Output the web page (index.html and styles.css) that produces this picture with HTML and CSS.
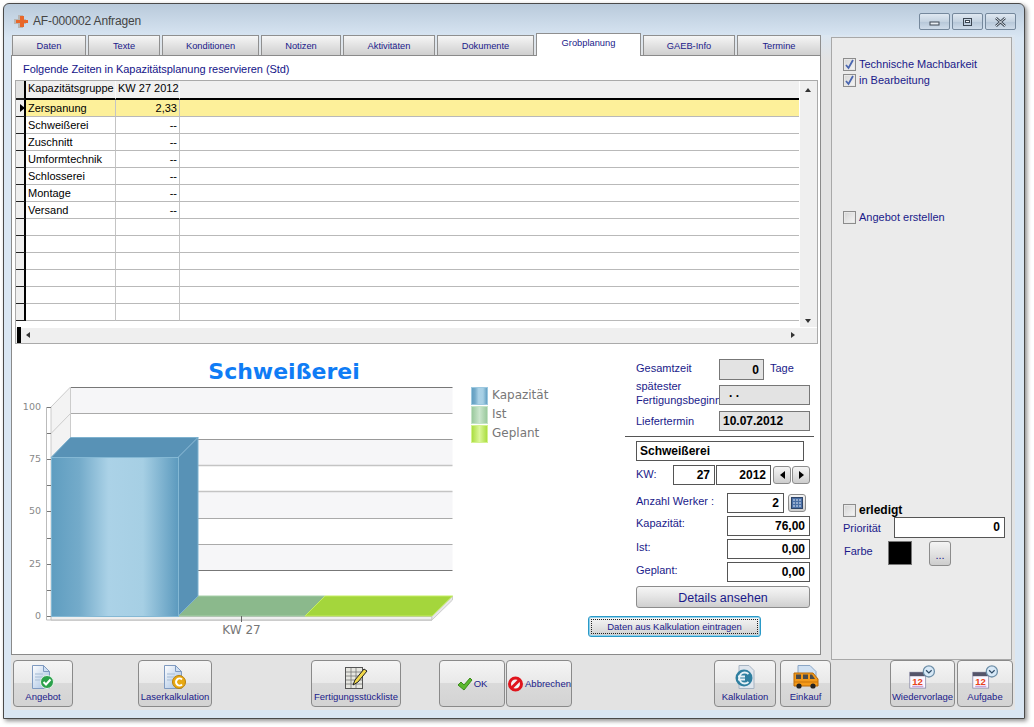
FILE: index.html
```html
<!DOCTYPE html>
<html lang="de">
<head>
<meta charset="utf-8">
<title>AF-000002 Anfragen</title>
<link rel="stylesheet" href="styles.css">
</head>
<body>
<svg class="defs" width="0" height="0">
  <defs>
    <linearGradient id="barGrad" x1="0" x2="1" y1="0" y2="0">
      <stop offset="0" stop-color="#5f9dc0"/><stop offset=".22" stop-color="#74abca"/><stop offset=".45" stop-color="#abd2e7"/><stop offset=".72" stop-color="#a6cfe4"/><stop offset="1" stop-color="#5c9abe"/>
    </linearGradient>
    <linearGradient id="istGrad" x1="0" x2="1" y1="0" y2="0">
      <stop offset="0" stop-color="#97c79a"/><stop offset=".5" stop-color="#cbe6cd"/><stop offset="1" stop-color="#97c79a"/>
    </linearGradient>
    <linearGradient id="planGrad" x1="0" x2="1" y1="0" y2="0">
      <stop offset="0" stop-color="#a8dc3c"/><stop offset=".5" stop-color="#dcf79a"/><stop offset="1" stop-color="#a8dc3c"/>
    </linearGradient>
    <linearGradient id="docGrad" x1="0" x2="1" y1="0" y2="1">
      <stop offset="0" stop-color="#ffffff"/><stop offset="1" stop-color="#9fbce0"/>
    </linearGradient>
    <symbol id="doc" viewBox="0 0 24 24">
      <path d="M1.500 .5h11l6 6v17H1.500z" fill="url(#docGrad)" stroke="#7f9ac0"/>
      <path d="M12.500 .5v6h6z" fill="#cfe0f4" stroke="#7f9ac0"/>
      <path d="M4 9h8M4 12h11M4 15h7" stroke="#b7c9de" stroke-width="1.400"/>
    </symbol>
    <symbol id="cal" viewBox="0 0 34 30">
      <rect x="1" y="9" width="20" height="20" fill="#fbf7ff" stroke="#8a8aa8"/>
      <rect x="1" y="9" width="20" height="5" fill="#55556a"/>
      <path d="M4 27h14" stroke="#c9a6d8" stroke-width="2"/>
      <text x="4" y="25" class="cal-num">12</text>
      <circle cx="25" cy="8" r="7" fill="#d8e9f7" stroke="#6e8fa8" stroke-width="1.600"/>
      <path d="M21.500 6.500l3.500 3.500 3.500-3.500" fill="none" stroke="#2e4a66" stroke-width="1.500"/>
    </symbol>
  </defs>
</svg>

<div class="window">
  <header class="titlebar">
    <svg class="app-icon" width="15" height="15" viewBox="0 0 15 15">
      <path d="M0 5h4V1h5v4h3v5H9v4H4v-4H0z" fill="#b9b5b2"/>
      <path d="M6 2h4v4h4v3h-4v4H6V9H2V6h4z" fill="#e8672a"/>
    </svg>
    <span class="title">AF-000002 Anfragen</span>
    <div class="win-buttons">
      <button class="win-btn"><svg width="11" height="9" viewBox="0 0 11 9"><rect x="1" y="5" width="9" height="3" fill="#e8eef4" stroke="#3c4652"/></svg></button>
      <button class="win-btn"><svg width="11" height="10" viewBox="0 0 11 10"><rect x="1.500" y="1.500" width="8" height="7" fill="none" stroke="#3c4652"/><rect x="3.500" y="3.500" width="4" height="2" fill="#fff" stroke="#3c4652"/></svg></button>
      <button class="win-btn"><svg width="13" height="10" viewBox="0 0 13 10"><path d="M2 1l9 8M11 1l-9 8" stroke="#3c4652" stroke-width="2.600"/><path d="M2 1l9 8M11 1l-9 8" stroke="#e6edf3" stroke-width="1"/></svg></button>
    </div>
  </header>

  <div class="client">
    <div class="main">
      <div class="left">
        <nav class="tabs">
          <div class="tab">Daten</div>
          <div class="tab">Texte</div>
          <div class="tab">Konditionen</div>
          <div class="tab">Notizen</div>
          <div class="tab">Aktivitäten</div>
          <div class="tab">Dokumente</div>
          <div class="tab tab-active">Grobplanung</div>
          <div class="tab">GAEB-Info</div>
          <div class="tab">Termine</div>
        </nav>

        <section class="page">
          <div class="caption">Folgende Zeiten in Kapazitätsplanung reservieren (Std)</div>

          <div class="datagrid">
            <div class="grid-top">
              <div class="grid-view">
                <table class="gtable">
                  <thead>
                    <tr><th class="ind"></th><th class="c1">Kapazitätsgruppe</th><th class="c2">KW 27 2012</th><th class="c3"></th></tr>
                  </thead>
                  <tbody>
                    <tr class="sel"><td class="ind"><span class="marker"></span></td><td>Zerspanung</td><td class="num">2,33</td><td></td></tr>
                    <tr><td class="ind"></td><td>Schweißerei</td><td class="num">--</td><td></td></tr>
                    <tr><td class="ind"></td><td>Zuschnitt</td><td class="num">--</td><td></td></tr>
                    <tr><td class="ind"></td><td>Umformtechnik</td><td class="num">--</td><td></td></tr>
                    <tr><td class="ind"></td><td>Schlosserei</td><td class="num">--</td><td></td></tr>
                    <tr><td class="ind"></td><td>Montage</td><td class="num">--</td><td></td></tr>
                    <tr><td class="ind"></td><td>Versand</td><td class="num">--</td><td></td></tr>
                    <tr><td class="ind"></td><td></td><td></td><td></td></tr>
                    <tr><td class="ind"></td><td></td><td></td><td></td></tr>
                    <tr><td class="ind"></td><td></td><td></td><td></td></tr>
                    <tr><td class="ind"></td><td></td><td></td><td></td></tr>
                    <tr><td class="ind"></td><td></td><td></td><td></td></tr>
                    <tr><td class="ind"></td><td></td><td></td><td></td></tr>
                  </tbody>
                </table>
              </div>
              <div class="vscroll"><span class="arrow-up"></span><span class="arrow-down"></span></div>
            </div>
            <div class="hscroll"><span class="hstub"></span><span class="arrow-left"></span><span class="arrow-right"></span></div>
          </div>

          <div class="lower">
            <svg class="chart" width="576" height="311" viewBox="12 344 576 311">
              <text x="284" y="379" class="c-title" text-anchor="middle">Schweißerei</text>
              <rect x="70.500" y="387" width="382" height="26.500" fill="#f6f6f8"/>
              <rect x="70.500" y="439.500" width="382" height="26" fill="#f6f6f8"/>
              <rect x="70.500" y="491.500" width="382" height="26.500" fill="#f6f6f8"/>
              <rect x="70.500" y="544" width="382" height="26" fill="#f6f6f8"/>
              <g class="c-lines">
                <path d="M70.500 387.500H452.500" stroke="#777"/>
                <path d="M70.500 413.500H452.500" stroke="#aaa"/>
                <path d="M70.500 439.500H452.500" stroke="#999"/>
                <path d="M70.500 465.500H452.500" stroke="#c4c4c4" stroke-width="1.400"/>
                <path d="M70.500 491.500H452.500" stroke="#c4c4c4" stroke-width="1.400"/>
                <path d="M70.500 518.500H452.500" stroke="#aaa"/>
                <path d="M70.500 544.500H452.500" stroke="#aaa"/>
                <path d="M70.500 570.500H452.500" stroke="#777"/>
              </g>
              <path d="M51 407L70.500 387V596L51 616z" fill="#f3f3f3" stroke="#ccc"/>
              <path d="M51 433.500L70.500 413.500" stroke="#ccc"/>
              <path d="M46 407.500H51M46 433.500H51M46 459.500H51M46 485.500H51M46 511.500H51M46 538.500H51M46 564.500H51M46 590.500H51M46 616.500H51" stroke="#777"/>
              <path d="M46.500 407V620H432L452.500 597" fill="none" stroke="#bbb"/>
              <path d="M51 616.500H432V620H51z" fill="#efefef" stroke="#bbb"/>
              <path d="M432 616.500L452.500 596V600L432 620z" fill="#e8e8e8" stroke="#ccc"/>
              <g class="c-axis" text-anchor="end">
                <text x="41" y="410">100</text>
                <text x="41" y="462">75</text>
                <text x="41" y="514">50</text>
                <text x="41" y="567">25</text>
                <text x="41" y="619">0</text>
              </g>
              <path d="M178 616L198 596H325L305 616z" fill="#8bb98c" stroke="#a6d0a8"/>
              <path d="M305 616L325 596H452.500L432 616z" fill="#a4d63c" stroke="#c4ee60"/>
              <path d="M51 457.500L70.500 437.500H198L178 457.500z" fill="#5892b6" stroke="#7fb2cf"/>
              <path d="M178 457.500L198 437.500V596L178 616z" fill="#5892b6" stroke="#7fb2cf"/>
              <rect x="51.500" y="457.500" width="127" height="159" fill="url(#barGrad)" stroke="#84b8d4"/>
              <path d="M241.500 616V622" stroke="#666"/>
              <text x="241.500" y="634" class="c-cat" text-anchor="middle">KW 27</text>
              <rect x="471.500" y="387.500" width="16" height="17" fill="url(#barGrad)" stroke="#9cc8e0"/>
              <rect x="471.500" y="406.500" width="16" height="17" fill="url(#istGrad)" stroke="#c5e3c7"/>
              <rect x="471.500" y="425.500" width="16" height="17" fill="url(#planGrad)" stroke="#d4f290"/>
              <g class="c-legend">
                <text x="492" y="399">Kapazität</text>
                <text x="492" y="418">Ist</text>
                <text x="492" y="437">Geplant</text>
              </g>
            </svg>

            <div class="form">
              <div class="row r-total">
                <span class="lab lab-83 lab-up2">Gesamtzeit</span>
                <span class="box ro w45">0</span>
                <span class="lab unit lab-up2">Tage</span>
              </div>
              <div class="row r-start">
                <span class="lab lab-83 lab-two">spätester<br>Fertigungsbeginn</span>
                <span class="box ro w91 left-text dots">. .</span>
              </div>
              <div class="row r-deliv">
                <span class="lab lab-83">Liefertermin</span>
                <span class="box ro w91 left-text">10.07.2012</span>
              </div>
              <div class="sep"></div>
              <div class="row r-name"><span class="box w168 left-text">Schweißerei</span></div>
              <div class="row r-kw">
                <span class="lab lab-37 lab-up1">KW:</span>
                <span class="box w43">27</span>
                <span class="box w55">2012</span>
                <button class="mini mini-first"><span class="tri-left"></span></button>
                <button class="mini"><span class="tri-right"></span></button>
              </div>
              <div class="row r-work">
                <span class="lab lab-91 lab-up2">Anzahl Werker :</span>
                <span class="box w57">2</span>
                <button class="mini mini-calc">
                  <svg width="12" height="12" viewBox="0 0 12 12"><rect x="0.500" y="0.500" width="11" height="11" fill="#4a6fa5" stroke="#2e4468"/><path d="M2 3h8M2 6h8M2 9h8" stroke="#dbe6f5" stroke-width="1.200" stroke-dasharray="2 1"/></svg>
                </button>
              </div>
              <div class="row r-val"><span class="lab lab-91 lab-up">Kapazität:</span><span class="box w83">76,00</span></div>
              <div class="row r-val"><span class="lab lab-91 lab-up2">Ist:</span><span class="box w83">0,00</span></div>
              <div class="row r-val"><span class="lab lab-91 lab-up2">Geplant:</span><span class="box w83">0,00</span></div>
              <button class="btn details">Details ansehen</button>
              <button class="btn focusbtn"><span>Daten aus Kalkulation eintragen</span></button>
            </div>
          </div>
        </section>
      </div>

      <aside class="side">
        <label class="chk chk-1"><span class="cb on"><svg width="9" height="11" viewBox="0 0 9 11"><path d="M1 6l2.500 3L8 1" fill="none" stroke="#4a66b0" stroke-width="1.800"/></svg></span>Technische Machbarkeit</label>
        <label class="chk chk-2"><span class="cb on"><svg width="9" height="11" viewBox="0 0 9 11"><path d="M1 6l2.500 3L8 1" fill="none" stroke="#4a66b0" stroke-width="1.800"/></svg></span>in Bearbeitung</label>
        <label class="chk chk-3"><span class="cb"></span>Angebot erstellen</label>
        <label class="chk chk-4"><span class="cb"></span><b>erledigt</b></label>
        <div class="row s-prio"><span class="lab s-lab">Priorität</span><span class="box w111">0</span></div>
        <div class="row s-color">
          <span class="lab s-lab2 lab-up2">Farbe</span>
          <span class="swatch"></span>
          <button class="mini dots-btn">...</button>
        </div>
      </aside>
    </div>

    <footer class="bar">
      <button class="tool t-angebot">
        <svg class="ico" width="24" height="24" viewBox="0 0 24 24"><use href="#doc" width="24" height="24"/><circle cx="16" cy="17" r="6.500" fill="#2ba14b" stroke="#e7f4ea"/><path d="M12.500 17l2.500 2.500 4.500-5" fill="none" stroke="#fff" stroke-width="2"/></svg>
        <span>Angebot</span>
      </button>
      <button class="tool t-laser">
        <svg class="ico" width="24" height="24" viewBox="0 0 24 24"><use href="#doc" width="24" height="24"/><circle cx="16" cy="17" r="6.500" fill="#e8a912" stroke="#b97f0a"/><path d="M19 14.500a3.500 3.500 0 1 0 0 5" fill="none" stroke="#fff" stroke-width="2"/></svg>
        <span>Laserkalkulation</span>
      </button>
      <button class="tool t-fert">
        <svg class="ico" width="24" height="23" viewBox="0 0 24 23"><rect x="1.500" y="1.500" width="17" height="21" fill="#e6e6e0" stroke="#555"/><path d="M2 6h16M2 10h16M2 14h16M2 18h16M7 2v20M12 2v20" stroke="#777" stroke-width=".8"/><path d="M9 19l2-5L20 3l3 2-9 11z" fill="#f2d84a" stroke="#222"/></svg>
        <span>Fertigungsstückliste</span>
      </button>
      <button class="tool tool-row t-ok">
        <svg width="16" height="14" viewBox="0 0 16 14"><path d="M1 8l3-3 3 3 6-7 2 2-8 10z" fill="#5cb82e" stroke="#3a8a1a"/></svg>
        <span>OK</span>
      </button>
      <button class="tool tool-row t-abort">
        <svg width="17" height="16" viewBox="0 0 17 16"><circle cx="8.500" cy="8" r="6" fill="#f3f3f3" stroke="#e0141c" stroke-width="3"/><path d="M4.500 12l8-8" stroke="#e0141c" stroke-width="3"/></svg>
        <span>Abbrechen</span>
      </button>
      <button class="tool t-kalk">
        <svg class="ico" width="24" height="24" viewBox="0 0 24 24"><path d="M6 .5h10l5 5v18H6z" fill="#dfe6ee" stroke="#a7b4c2"/><circle cx="11" cy="13" r="8.500" fill="#2f7fa0"/><path d="M15.500 9a5.500 5.500 0 1 0 0 8M5 11.500h7M5 14.500h7" fill="none" stroke="#e7f2f7" stroke-width="1.800"/></svg>
        <span>Kalkulation</span>
      </button>
      <button class="tool t-eink">
        <svg class="ico" width="26" height="24" viewBox="0 0 26 24"><path d="M5 .5h12l6 6v12H5z" fill="#cfe0f2" stroke="#8aa6c6"/><path d="M1 8h19l5 6v7H1z" fill="#f49a1a" stroke="#b96a08"/><path d="M3 9.500h5V14H3zM10 9.500h5V14h-5zM17 9.500h2l3 4.500h-5z" fill="#4a4a4a"/><path d="M1 17h24" stroke="#c97408"/><circle cx="6" cy="21" r="2.600" fill="#222"/><circle cx="20" cy="21" r="2.600" fill="#222"/></svg>
        <span>Einkauf</span>
      </button>
      <button class="tool t-wied">
        <svg class="ico" width="27" height="24" viewBox="0 0 34 30"><use href="#cal" width="34" height="30"/></svg>
        <span>Wiedervorlage</span>
      </button>
      <button class="tool t-aufg">
        <svg class="ico" width="27" height="24" viewBox="0 0 34 30"><use href="#cal" width="34" height="30"/></svg>
        <span>Aufgabe</span>
      </button>
    </footer>
  </div>
</div>
</body>
</html>
```
FILE: styles.css
```css
* { box-sizing: border-box; }
html, body { margin: 0; padding: 0; background: #fff; }
body { width: 1034px; height: 727px; overflow: hidden; font-family: "Liberation Sans", Arial, sans-serif; font-size: 11px; color: #000; }
.defs { position: absolute; }
button { font-family: inherit; padding: 0; margin: 0; cursor: default; }

.window {
  width: 1022px; height: 716px; margin: 3px 0 0 3px;
  border: 1px solid #4a4a4a; border-radius: 6px 6px 0 0;
  background: linear-gradient(#b9cadb 0, #d9e6f3 34px);
  box-shadow: 2px 2px 4px rgba(0,0,0,.45);
  display: flex; flex-direction: column;
}
.titlebar { height: 31px; flex: none; display: flex; align-items: flex-start; padding: 9px 8px 0 10px; }
.app-icon { margin-top: 1px; }
.title { margin: 1px 0 0 4px; font-size: 12px; line-height: 15px; color: #444; letter-spacing: -.15px; }
.win-buttons { margin-left: auto; display: flex; gap: 2px; }
.win-btn {
  width: 31px; height: 17px; border: 1px solid #75889c; border-radius: 2px;
  background: linear-gradient(#dfe8f1, #c5d3e1 50%, #b5c6d7 51%, #cfdcea);
  display: flex; align-items: center; justify-content: center;
}

.client { margin: 0 9px 8px 7px; flex: 1; display: flex; flex-direction: column; min-height: 0; }
.main { display: flex; height: 625px; background: linear-gradient(#dbe6f1 0, #e3e3e3 24px); flex: none; }
.left { width: 810px; flex: none; }

.tabs { display: grid; grid-template-columns: 76px 74px 99px 82px 94px 99px 107px 94px 84px; height: 20px; margin-left: 1px; position: relative; z-index: 1; }
.tab {
  margin-right: 2px; height: 20px;
  border: 1px solid #8f8f8f; border-bottom: none;
  background: linear-gradient(#f6f6f6, #e2e2e2 50%, #cfcfcf);
  color: #1a1a8a; font-size: 9.300px; line-height: 20px; text-align: center;
}
.tab:last-child { margin-right: 0; }
.tab-active { margin: -2px 2px 0 0; height: 23px; background: #fff; line-height: 19px; }

.page { height: 600px; border: 1px solid #8a8a8a; background: #fff; display: flex; flex-direction: column; }
.caption { height: 24px; padding: 7px 0 0 11px; color: #141488; line-height: 13px; letter-spacing: -.06px; }

.datagrid { margin-left: 3px; width: 803px; height: 264px; border: 1px solid #aaa; display: flex; flex-direction: column; flex: none; }
.grid-top { display: flex; height: 246px; flex: none; }
.grid-view { width: 783px; flex: none; overflow: hidden; height: 246px; }
.gtable { border-collapse: separate; border-spacing: 0; table-layout: fixed; width: 783px; }
.gtable th, .gtable td { height: 17px; padding: 0 2px 0 2px; font-weight: normal; text-align: left; border-bottom: 1px solid #b9b9b9; border-right: 1px solid #c4c4c4; font-size: 11px; line-height: 15px; white-space: nowrap; overflow: hidden; }
.gtable th { height: 19px; background: #f0f0f0; border-bottom: 2px solid #000; border-right-color: #fafafa; padding-bottom: 2px; }
.gtable .ind { width: 10px; background: #efefef; border-right: 2px solid #000; border-bottom: 1px solid #222; padding: 0; position: relative; }
.gtable th.ind { background: #e2e2e2; border-bottom-width: 2px; }
.gtable .c1 { width: 90px; }
.gtable .c2 { width: 64px; text-align: right; }
.gtable .c3 { border-right: none; }
.gtable td:last-child { border-right: none; }
.gtable .num { text-align: right; }
.sel td { background: #fdf09a; }
.marker { display: block; width: 0; height: 0; margin: 0 0 0 4px; border-left: 5px solid #000; border-top: 4px solid transparent; border-bottom: 4px solid transparent; }

.vscroll { width: 17px; margin-left: 1px; background: #efefef; position: relative; }
.hscroll { height: 16px; background: #efefef; position: relative; border-top: 1px solid #fff; }
.hstub { position: absolute; left: 1px; top: -1px; width: 4px; height: 16px; background: #000; }
.arrow-up, .arrow-down, .arrow-left, .arrow-right { position: absolute; width: 0; height: 0; }
.arrow-up { left: 5px; top: 7px; border: 3px solid transparent; border-top: none; border-bottom: 4px solid #333; }
.arrow-down { left: 5px; bottom: 4px; border: 3px solid transparent; border-bottom: none; border-top: 4px solid #333; }
.arrow-left { left: 10px; top: 4px; border: 3px solid transparent; border-left: none; border-right: 4px solid #333; }
.arrow-right { right: 22px; top: 4px; border: 3px solid transparent; border-right: none; border-left: 4px solid #333; }

.lower { display: flex; flex: 1; min-height: 0; }
.chart { flex: none; display: block; width: 576px; }
.c-title { font-family: "DejaVu Sans", sans-serif; font-weight: bold; font-size: 22px; fill: #0f7cf5; }
.c-axis { font-family: "DejaVu Sans", sans-serif; font-size: 9.500px; fill: #888; }
.c-cat { font-family: "DejaVu Sans", sans-serif; font-size: 12px; fill: #777; }
.c-legend { font-family: "DejaVu Sans", sans-serif; font-size: 12px; fill: #777; }
.cal-num { font-family: "Liberation Sans", sans-serif; font-weight: bold; font-size: 12px; fill: #e8431a; }

.form { width: 226px; flex: none; display: flex; flex-direction: column; }
.row { display: flex; align-items: center; flex: none; }
.form > .row { margin-left: 48px; }
.lab { color: #1a1a8a; font-size: 11px; line-height: 14px; white-space: nowrap; flex: none; }
.lab-83 { width: 83px; }
.lab-37 { width: 37px; }
.lab-91 { width: 91px; }
.lab-two { margin-top: -4px; }
.lab-up { margin-top: -6px; }
.lab-up1 { margin-top: -2px; }
.lab-up2 { margin-top: -4px; }
.unit { margin-left: 6px; }

.box {
  height: 20px; border: 1px solid #555; background: #fff; display: block; flex: none;
  font-weight: bold; font-size: 12px; line-height: 18px; text-align: right; padding: 0 4px;
}
.ro { background: #e3e3e3; border-color: #777; }
.left-text { text-align: left; padding-left: 3px; }
.dots { padding-left: 9px; line-height: 14px; }
.w45 { width: 45px; } .w91 { width: 91px; } .w168 { width: 168px; } .w43 { width: 42px; margin-right: 1px; }
.w55 { width: 55px; } .w57 { width: 57px; } .w83 { width: 83px; } .w111 { width: 111px; }

.r-total { height: 21px; margin-top: 15px; }
.r-total .box { height: 21px; line-height: 20px; }
.r-start { height: 20px; margin-top: 5px; }
.r-deliv { height: 20px; margin-top: 6px; }
.sep { width: 189px; height: 1px; margin: 5px 0 0 37px; background: #555; flex: none; }
.r-name { height: 20px; margin-top: 4px; }
.r-kw { height: 20px; margin-top: 4px; }
.r-work { height: 20px; margin-top: 8px; }
.r-val { height: 20px; margin-top: 3px; }

.mini {
  width: 18px; height: 18px; border: 1px solid #8c8c8c; border-radius: 3px; flex: none;
  background: linear-gradient(#f4f4f4, #e2e2e2 50%, #cdcdcd);
  display: flex; align-items: center; justify-content: center;
}
.mini-first { margin-left: 2px; margin-right: 1px; }
.mini-calc { margin-left: 4px; }
.tri-left { border: 4px solid transparent; border-left: none; border-right: 5px solid #000; }
.tri-right { border: 4px solid transparent; border-right: none; border-left: 5px solid #000; }

.btn {
  border: 1px solid #8c8c8c; border-radius: 3px; color: #1a1a8a; flex: none;
  background: linear-gradient(#f6f6f6, #e4e4e4 50%, #cfcfcf);
}
.details { width: 174px; height: 22px; margin: 4px 0 0 48px; font-size: 12.500px; padding-top: 1px; }
.focusbtn { width: 173px; height: 21px; margin-top: 8px; border: 1px solid #2a9ac8; box-shadow: inset 0 0 0 1px #8fd0ec; border-radius: 3px; padding: 2px; font-size: 9.500px; }
.focusbtn span { display: block; height: 100%; line-height: 13px; border: 1px dotted #222; }

.side {
  width: 181px; height: 623px; margin: 2px 0 0 10px; flex: none;
  border: 1px solid #a8a8a8; background: #ebebeb; display: flex; flex-direction: column; padding-left: 11px;
}
.chk { display: flex; align-items: center; color: #1a1a8a; height: 14px; font-size: 11px; flex: none; }
.chk b { color: #000; font-size: 12px; }
.cb { width: 13px; height: 13px; margin-right: 3px; border: 1px solid #8c8c8c; background: linear-gradient(135deg, #d4d4d4, #f6f6f6); box-shadow: inset 0 0 0 1px #e8e8e8; display: flex; align-items: center; justify-content: center; flex: none; }
.chk-1 { margin-top: 19px; }
.chk-2 { margin-top: 2px; }
.chk-3 { margin-top: 123px; }
.chk-4 { margin-top: 279px; }
.s-prio { height: 21px; }
.s-prio .box { height: 21px; line-height: 19px; }
.s-lab { width: 51px; }
.s-color { margin-top: 2px; height: 26px; }
.s-lab2 { width: 44px; margin-left: 1px; }
.swatch { width: 24px; height: 24px; background: #000; border: 1px solid #777; flex: none; }
.dots-btn { width: 22px; height: 25px; margin-left: 17px; color: #1a1a8a; font-size: 11px; align-items: flex-end; padding-bottom: 4px; }

.bar { height: 50px; background: #e3e3e3; display: flex; flex: none; }
.tool {
  height: 47px; flex: none; border: 1px solid #8a8a8a; border-radius: 4px;
  background: linear-gradient(#f4f4f4, #e9e9e9 48%, #dadada 49%, #d3d3d3);
  color: #1a1a8a; font-size: 9.500px; display: flex; flex-direction: column; align-items: center; justify-content: flex-end; padding-bottom: 4px;
  white-space: nowrap;
}
.tool .ico { margin-bottom: 2px; }
.tool-row { flex-direction: row; justify-content: center; align-items: center; gap: 1px; padding-bottom: 0; }
.t-angebot { width: 60px; margin-left: 2px; }
.t-laser { width: 74px; margin-left: 65px; }
.t-fert { width: 90px; margin-left: 99px; }
.t-ok { width: 66px; margin-left: 38px; }
.t-abort { width: 66px; margin-left: 1px; }
.t-kalk { width: 62px; margin-left: 142px; }
.t-eink { width: 51px; margin-left: 4px; }
.t-wied { width: 65px; margin-left: 59px; }
.t-aufg { width: 56px; margin-left: 2px; }
```
